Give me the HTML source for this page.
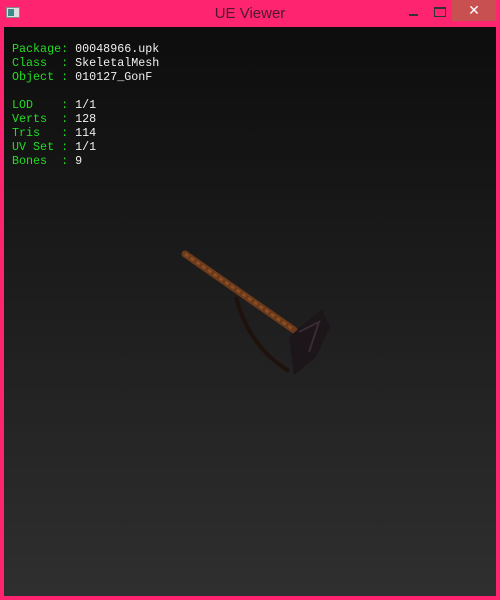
<!DOCTYPE html>
<html><head><style>
html,body{margin:0;padding:0;width:500px;height:600px;overflow:hidden;background:#ff2470;}
#t{position:absolute;left:0;top:0;width:500px;height:27px;text-align:center;font:15px "Liberation Sans",sans-serif;color:#4a1a2a;line-height:27px}
#c{position:absolute;left:4px;top:27px;width:492px;height:569px;background:linear-gradient(#0d0d0d,#2f2f2f)}
pre{position:absolute;left:8px;top:15px;margin:0;font:11.7px/14px "Liberation Mono",monospace;color:#f0f0f0}
g1{color:#22dd22}
#x{position:absolute;left:452px;top:0;width:44px;height:21px;background:#c85050;color:#fff;font:14px "Liberation Sans",sans-serif;text-align:center;line-height:21px}
</style></head><body>
<div id="t">UE Viewer</div>
<div style="position:absolute;left:6px;top:7px;width:14px;height:11px;background:#ddd;border:1px solid #888;box-sizing:border-box"><div style="width:6px;height:7px;margin:1px;background:#3a8a8a"></div></div>
<div style="position:absolute;left:409px;top:14px;width:9px;height:2px;background:#333"></div>
<div style="position:absolute;left:434px;top:7px;width:10px;height:7px;border:1px solid #333;border-top-width:2px"></div>
<div id="x">✕</div>
<div id="c">
<pre><g1>Package:</g1> 00048966.upk
<g1>Class  :</g1> SkeletalMesh
<g1>Object :</g1> 010127_GonF

<g1>LOD    :</g1> 1/1
<g1>Verts  :</g1> 128
<g1>Tris   :</g1> 114
<g1>UV Set :</g1> 1/1
<g1>Bones  :</g1> 9</pre>
<svg width="492" height="569" style="position:absolute;left:0;top:0">
<path d="M232 270 Q245 320 285 344" stroke="#1e120c" stroke-width="4" fill="none"/>
<path d="M181 227 L290 303" stroke="#6a3a1a" stroke-width="7" stroke-linecap="round"/>
<path d="M181 227 L290 303" stroke="#8a4d25" stroke-width="3" stroke-dasharray="4 3"/>
<path d="M285 310 L318 282 L326 300 L312 330 L290 348 Z" fill="#1c1519"/>
<path d="M295 305 L315 295 L305 325" stroke="#3a2a35" stroke-width="2" fill="none"/>
</svg>
</div>
</body></html>
